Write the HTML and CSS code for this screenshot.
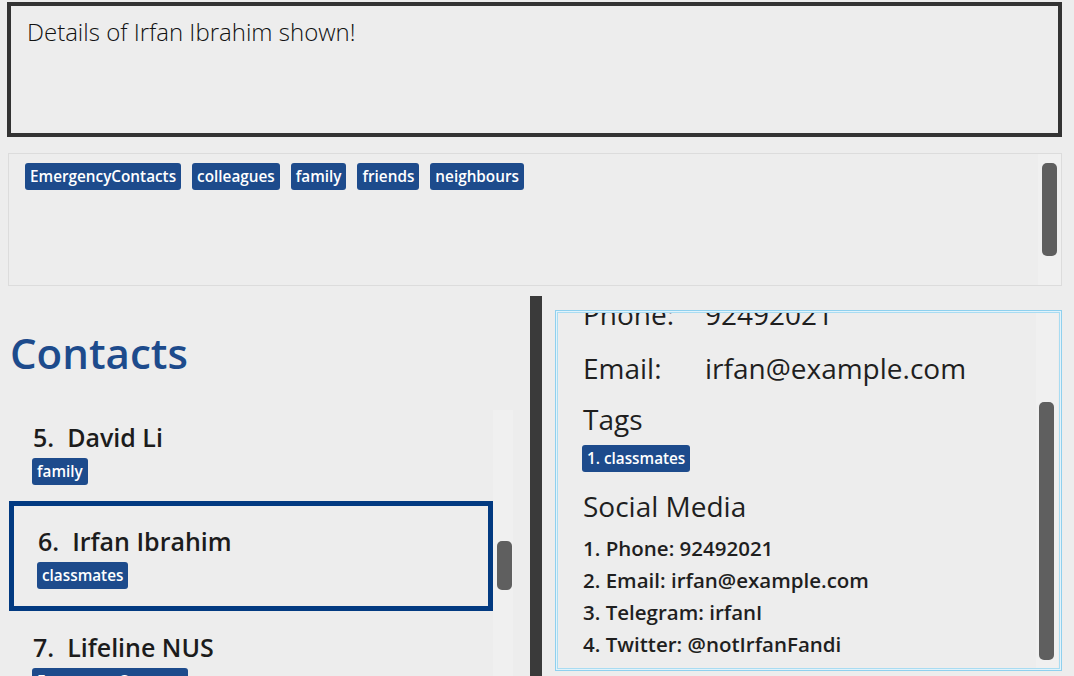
FILE: index.html
```html
<!DOCTYPE html>
<html>
<head>
<meta charset="utf-8">
<link rel="stylesheet" href="styles.css">
</head>
<body>
<div class="app">
  <div class="result-box">
    <p class="result-text">Details of Irfan Ibrahim shown!</p>
  </div>

  <div class="tag-panel">
    <div class="tag-row">
      <span class="tag">EmergencyContacts</span>
      <span class="tag">colleagues</span>
      <span class="tag">family</span>
      <span class="tag">friends</span>
      <span class="tag">neighbours</span>
    </div>
    <div class="scroll-track tag-track"><div class="thumb tag-thumb"></div></div>
  </div>

  <div class="main">
    <div class="left-panel">
      <h1 class="title">Contacts</h1>
      <div class="list">
        <div class="list-viewport">
          <div class="list-inner">
            <div class="item">
              <div class="name">5.&nbsp; David Li</div>
              <div class="item-tags"><span class="tag small">family</span></div>
            </div>
            <div class="item selected">
              <div class="name">6.&nbsp; Irfan Ibrahim</div>
              <div class="item-tags"><span class="tag small">classmates</span></div>
            </div>
            <div class="item">
              <div class="name">7.&nbsp; Lifeline NUS</div>
              <div class="item-tags"><span class="tag small">EmergencyContacts</span></div>
            </div>
          </div>
        </div>
        <div class="scroll-track list-track"><div class="thumb list-thumb"></div></div>
      </div>
    </div>

    <div class="divider"></div>

    <div class="right-panel">
      <div class="details">
        <div class="details-viewport">
          <div class="details-inner">
            <div class="field"><span class="label">Phone:</span><span class="value">92492021</span></div>
            <div class="field"><span class="label">Email:</span><span class="value">irfan@example.com</span></div>
            <div class="section-title">Tags</div>
            <div class="detail-tags"><span class="tag small">1. classmates</span></div>
            <div class="section-title social">Social Media</div>
            <ol class="social-list">
              <li>1. Phone: 92492021</li>
              <li>2. Email: irfan@example.com</li>
              <li>3. Telegram: irfanI</li>
              <li>4. Twitter: @notIrfanFandi</li>
            </ol>
          </div>
        </div>
        <div class="scroll-track details-track"><div class="thumb details-thumb"></div></div>
      </div>
    </div>
  </div>
</div>
</body>
</html>
```

FILE: styles.css
```css
* { box-sizing: border-box; }

html, body {
  margin: 0;
  padding: 0;
  background: #ededed;
  font-family: "Open Sans", "Noto Sans", sans-serif;
  color: #1f1f1f;
}

.app {
  width: 1074px;
  height: 676px;
  overflow: hidden;
}

.result-box {
  margin: 2px 12px 0 7px;
  height: 135px;
  border: 4px solid #333333;
  padding: 12px 16px;
}

.result-text {
  margin: 0;
  font-size: 24px;
  font-weight: 300;
  color: #111111;
  line-height: 28px;
}

.tag-panel {
  margin: 16px 12px 0 8px;
  height: 133px;
  border: 1px solid #dcdcdc;
  display: flex;
  justify-content: space-between;
}

.tag-row {
  display: flex;
  gap: 11px;
  padding: 9px 0 0 16px;
  align-items: flex-start;
}

.tag {
  background: #1d4b8c;
  color: #ffffff;
  font-weight: 600;
  font-size: 15.3px;
  line-height: 27px;
  height: 27px;
  padding: 0 5px;
  border-radius: 3px;
  white-space: nowrap;
  display: inline-block;
}

.scroll-track {
  background: #f0f0f0;
  position: relative;
}

.thumb {
  background: #5f5f5f;
  border-radius: 5px;
  position: absolute;
}

.tag-track {
  width: 23px;
}

.tag-thumb {
  left: 4px;
  width: 15px;
  top: 9px;
  height: 93px;
}

.main {
  display: flex;
  margin-top: 10px;
  height: 380px;
}

.left-panel {
  width: 530px;
  display: flex;
  flex-direction: column;
}

.title {
  margin: 28px 0 0 10px;
  font-size: 42px;
  font-weight: 600;
  color: #1d4b8c;
  line-height: 58px;
  height: 86px;
}

.list {
  flex: 1;
  display: flex;
  margin-left: 9px;
  width: 504px;
  overflow: hidden;
}

.list-viewport {
  width: 484px;
  overflow: hidden;
}

.list-inner {
  margin-top: -14px;
}

.item {
  height: 105px;
  padding: 24px 0 0 24px;
}

.item.selected {
  height: 110px;
  border: 5px solid #023a81;
  padding: 18px 0 0 24px;
  margin-bottom: -5px;
}

.name {
  font-size: 25px;
  font-weight: 600;
  line-height: 34px;
  color: #1c1c1c;
}

.item-tags {
  margin-top: 4px;
  margin-left: -1px;
  display: flex;
}

.tag.small {
  height: 27px;
  line-height: 27px;
}

.list-track {
  width: 20px;
}

.list-thumb {
  left: 4px;
  width: 15px;
  top: 131px;
  height: 49px;
}

.divider {
  width: 12px;
  background: #3a3a3a;
}

.right-panel {
  flex: 1;
  padding: 14px 12px 5px 13px;
}

.details {
  height: 361px;
  border: 1px solid #8fd0ee;
  box-shadow: inset 0 0 0 1px #e2f3fb, inset 0 0 0 2px #a9dcf2;
  display: flex;
  justify-content: space-between;
  padding: 2px 3px 2px 2px;
}

.details-viewport {
  flex: 1;
  overflow: hidden;
}

.details-inner {
  margin-top: -26px;
  padding-left: 25px;
}

.field {
  display: flex;
  font-size: 28px;
  line-height: 54px;
  font-weight: 400;
  color: #1f1f1f;
}

.label {
  width: 122px;
}

.section-title {
  font-size: 28px;
  line-height: 40px;
  margin-top: 4px;
  color: #1f1f1f;
}

.detail-tags {
  margin-top: 6px;
  margin-left: -1px;
  display: flex;
}

.section-title.social {
  margin-top: 14px;
}

.social-list {
  list-style: none;
  margin: 6px 0 0 0;
  padding: 0;
}

.social-list li {
  font-size: 20.5px;
  font-weight: 600;
  line-height: 32px;
  color: #1f1f1f;
}

.details-track {
  width: 22px;
}

.details-thumb {
  left: 3px;
  width: 15px;
  top: 89px;
  height: 258px;
}
```
